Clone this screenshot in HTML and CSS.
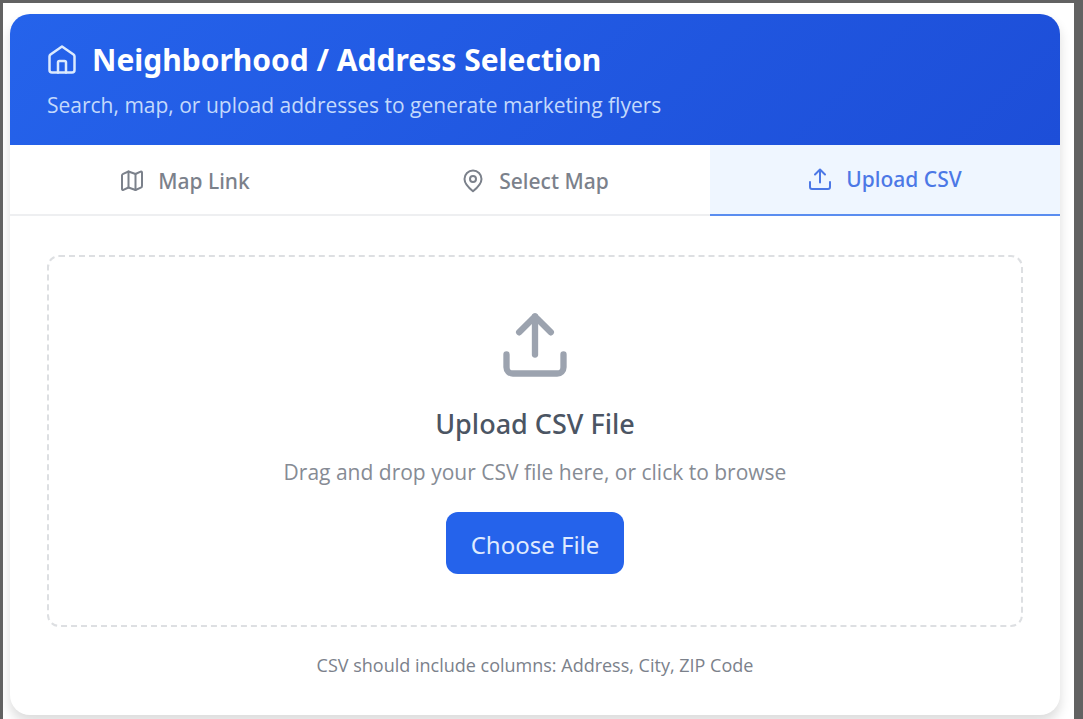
FILE: index.html
```html
<!DOCTYPE html>
<html lang="en">
<head>
<meta charset="utf-8">
<meta name="viewport" content="width=device-width, initial-scale=1">
<title>Neighborhood / Address Selection</title>
<link rel="stylesheet" href="styles.css">
</head>
<body>
<main class="page">
  <section class="card">
    <header class="card-header">
      <h1 class="title">
        <svg class="icon icon-home" viewBox="0 0 24 24" aria-hidden="true"><path d="M8.800 22v-8a1.200 1.200 0 0 1 1.200-1.200h4a1.200 1.200 0 0 1 1.200 1.200v8"/><path d="M2 9.200a2 2 0 0 1 .8-1.600L12 1.200l9.200 6.400a2 2 0 0 1 .8 1.600V20a2 2 0 0 1-2 2H4a2 2 0 0 1-2-2z"/></svg>
        <span>Neighborhood / Address Selection</span>
      </h1>
      <p class="subtitle">Search, map, or upload addresses to generate marketing flyers</p>
    </header>
    <nav class="tabs" aria-label="Address source">
      <button class="tab" type="button">
        <svg class="icon icon-tab" viewBox="0 0 24 24" aria-hidden="true"><path d="M8.500 2.500 3.200 4.800A2 2 0 0 0 2 6.600V20a1 1 0 0 0 1.400.9l5.100-2.400 7 2.500 5.300-2.300a2 2 0 0 0 1.200-1.800V3.500a1 1 0 0 0-1.400-.9L15.500 5z"/><path d="M8.500 2.500v16"/><path d="M15.500 5v16"/></svg>
        <span>Map Link</span>
      </button>
      <button class="tab" type="button">
        <svg class="icon icon-tab" viewBox="0 0 24 24" aria-hidden="true"><path d="M20.500 10c0 5-5.700 10-8.500 12.200C9.200 20 3.500 15 3.500 10a8.500 8.500 0 0 1 17 0z"/><circle cx="12" cy="10" r="3"/></svg>
        <span>Select Map</span>
      </button>
      <button class="tab tab-active" type="button" aria-current="page">
        <svg class="icon icon-tab" viewBox="0 0 24 24" aria-hidden="true"><path d="M12 15.500V3"/><path d="m7 7.500 5-5 5 5"/><path d="M2 15v5a2 2 0 0 0 2 2h16a2 2 0 0 0 2-2v-5"/></svg>
        <span>Upload CSV</span>
      </button>
    </nav>
    <div class="content">
      <div class="dropzone">
        <svg class="icon icon-upload" viewBox="0 0 24 24" aria-hidden="true"><path d="M12 15V3"/><path d="m7 8 5-5 5 5"/><path d="M3 15v4a2 2 0 0 0 2 2h14a2 2 0 0 0 2-2v-4"/></svg>
        <h2 class="drop-title">Upload CSV File</h2>
        <p class="drop-text">Drag and drop your CSV file here, or click to browse</p>
        <button class="choose" type="button">Choose File</button>
      </div>
      <p class="hint">CSV should include columns: Address, City, ZIP Code</p>
    </div>
  </section>
</main>
</body>
</html>
```

FILE: styles.css
```css
* {
  box-sizing: border-box;
}

body {
  margin: 0;
  padding: 3px 9px 0 3px;
  background: #626262;
  font-family: "Noto Sans", "Open Sans", sans-serif;
}

h1, h2, p {
  margin: 0;
}

button {
  border: 0;
  font-family: inherit;
  cursor: pointer;
}

.page {
  min-height: calc(100vh - 3px);
  padding: 11px 14px 4px 7px;
  background: #fff;
  overflow: hidden;
}

.card {
  border-radius: 20px;
  background: #fff;
  box-shadow: 0 7px 12px rgba(0, 0, 0, 0.14);
  overflow: hidden;
}

.card-header {
  padding: 28px 37px 26px;
  background: linear-gradient(135deg, #2563eb, #1d4ed8);
  color: #fff;
}

.icon {
  flex: none;
  fill: none;
  stroke: currentColor;
  stroke-width: 2;
  stroke-linecap: round;
  stroke-linejoin: round;
}

.icon-home {
  width: 30px;
  height: 32px;
  color: #dbeafe;
}

.title {
  display: flex;
  align-items: center;
  gap: 15px;
  font-size: 30px;
  font-weight: 700;
  line-height: 36px;
}

.subtitle {
  margin-top: 13px;
  color: #c3d9fc;
  font-family: "Open Sans", sans-serif;
  font-size: 21px;
  line-height: 28px;
}

.tabs {
  display: grid;
  grid-template-columns: repeat(3, 1fr);
}

.tab {
  display: flex;
  align-items: center;
  justify-content: center;
  gap: 14px;
  height: 71px;
  padding: 2px 0 0;
  border-bottom: 2px solid #eeeff1;
  background: #fff;
  color: #7b818b;
  font-size: 21px;
  font-weight: 500;
}

.tab-active {
  padding: 0 0 2px;
  border-bottom-color: #5a8df0;
  background: #eff6ff;
  color: #4c78e6;
}

.icon-tab {
  width: 24px;
  height: 24px;
}

.content {
  padding: 39px 37px 36px;
}

.dropzone {
  display: flex;
  flex-direction: column;
  align-items: center;
  padding: 50px 24px 51px;
  border: 2px dashed #dddfe2;
  border-radius: 12px;
}

.icon-upload {
  width: 76px;
  height: 76px;
  color: #9ca3af;
}

.drop-title {
  margin-top: 23px;
  color: #4b5563;
  font-size: 27px;
  font-weight: 500;
  line-height: 36px;
}

.drop-text {
  margin-top: 14px;
  color: #868b94;
  font-family: "Open Sans", sans-serif;
  font-size: 21px;
  line-height: 32px;
}

.choose {
  margin-top: 24px;
  height: 62px;
  padding: 2px 25px 0;
  border-radius: 12px;
  background: #2563eb;
  color: #dfeafe;
  font-size: 24px;
  font-weight: 400;
}

.hint {
  margin-top: 24px;
  color: #7b818b;
  font-family: "Open Sans", sans-serif;
  font-size: 18px;
  line-height: 28px;
  text-align: center;
}
```
